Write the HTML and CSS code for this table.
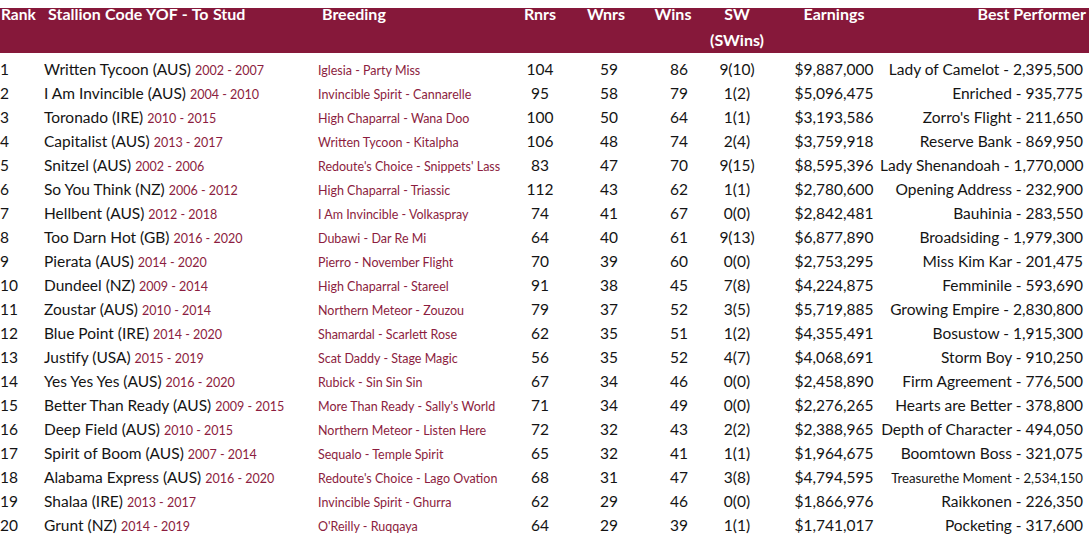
FILE: index.html
```html
<!DOCTYPE html>
<html lang="en">
<head>
<meta charset="utf-8">
<title>Stallions</title>
<link rel="stylesheet" href="styles.css">
</head>
<body>
<div class="wrap">
<table class="sires">
<colgroup>
<col class="c-rank"><col class="c-name"><col class="c-breed"><col class="c-rnrs"><col class="c-wnrs"><col class="c-wins"><col class="c-sw"><col class="c-earn"><col class="c-best">
</colgroup>
<thead>
<tr>
<th class="h-rank">Rank</th>
<th class="h-name">Stallion Code YOF - To Stud</th>
<th class="h-breed">Breeding</th>
<th class="h-rnrs">Rnrs</th>
<th class="h-wnrs">Wnrs</th>
<th class="h-wins">Wins</th>
<th class="h-sw">SW<br>(SWins)</th>
<th class="h-earn">Earnings</th>
<th class="h-best">Best Performer</th>
</tr>
</thead>
<tbody>
<tr><td class="rank">1</td><td class="name">Written Tycoon (AUS) <span class="yr">2002 - 2007</span></td><td class="breed"><span class="br">Iglesia - Party Miss</span></td><td class="rnrs">104</td><td class="wnrs">59</td><td class="wins">86</td><td class="sw">9(10)</td><td class="earn">$9,887,000</td><td class="best">Lady of Camelot - 2,395,500</td></tr>
<tr><td class="rank">2</td><td class="name">I Am Invincible (AUS) <span class="yr">2004 - 2010</span></td><td class="breed"><span class="br">Invincible Spirit - Cannarelle</span></td><td class="rnrs">95</td><td class="wnrs">58</td><td class="wins">79</td><td class="sw">1(2)</td><td class="earn">$5,096,475</td><td class="best">Enriched - 935,775</td></tr>
<tr><td class="rank">3</td><td class="name">Toronado (IRE) <span class="yr">2010 - 2015</span></td><td class="breed"><span class="br">High Chaparral - Wana Doo</span></td><td class="rnrs">100</td><td class="wnrs">50</td><td class="wins">64</td><td class="sw">1(1)</td><td class="earn">$3,193,586</td><td class="best">Zorro's Flight - 211,650</td></tr>
<tr><td class="rank">4</td><td class="name">Capitalist (AUS) <span class="yr">2013 - 2017</span></td><td class="breed"><span class="br">Written Tycoon - Kitalpha</span></td><td class="rnrs">106</td><td class="wnrs">48</td><td class="wins">74</td><td class="sw">2(4)</td><td class="earn">$3,759,918</td><td class="best">Reserve Bank - 869,950</td></tr>
<tr><td class="rank">5</td><td class="name">Snitzel (AUS) <span class="yr">2002 - 2006</span></td><td class="breed"><span class="br">Redoute's Choice - Snippets' Lass</span></td><td class="rnrs">83</td><td class="wnrs">47</td><td class="wins">70</td><td class="sw">9(15)</td><td class="earn">$8,595,396</td><td class="best">Lady Shenandoah - 1,770,000</td></tr>
<tr><td class="rank">6</td><td class="name">So You Think (NZ) <span class="yr">2006 - 2012</span></td><td class="breed"><span class="br">High Chaparral - Triassic</span></td><td class="rnrs">112</td><td class="wnrs">43</td><td class="wins">62</td><td class="sw">1(1)</td><td class="earn">$2,780,600</td><td class="best">Opening Address - 232,900</td></tr>
<tr><td class="rank">7</td><td class="name">Hellbent (AUS) <span class="yr">2012 - 2018</span></td><td class="breed"><span class="br">I Am Invincible - Volkaspray</span></td><td class="rnrs">74</td><td class="wnrs">41</td><td class="wins">67</td><td class="sw">0(0)</td><td class="earn">$2,842,481</td><td class="best">Bauhinia - 283,550</td></tr>
<tr><td class="rank">8</td><td class="name">Too Darn Hot (GB) <span class="yr">2016 - 2020</span></td><td class="breed"><span class="br">Dubawi - Dar Re Mi</span></td><td class="rnrs">64</td><td class="wnrs">40</td><td class="wins">61</td><td class="sw">9(13)</td><td class="earn">$6,877,890</td><td class="best">Broadsiding - 1,979,300</td></tr>
<tr><td class="rank">9</td><td class="name">Pierata (AUS) <span class="yr">2014 - 2020</span></td><td class="breed"><span class="br">Pierro - November Flight</span></td><td class="rnrs">70</td><td class="wnrs">39</td><td class="wins">60</td><td class="sw">0(0)</td><td class="earn">$2,753,295</td><td class="best">Miss Kim Kar - 201,475</td></tr>
<tr><td class="rank">10</td><td class="name">Dundeel (NZ) <span class="yr">2009 - 2014</span></td><td class="breed"><span class="br">High Chaparral - Stareel</span></td><td class="rnrs">91</td><td class="wnrs">38</td><td class="wins">45</td><td class="sw">7(8)</td><td class="earn">$4,224,875</td><td class="best">Femminile - 593,690</td></tr>
<tr><td class="rank">11</td><td class="name">Zoustar (AUS) <span class="yr">2010 - 2014</span></td><td class="breed"><span class="br">Northern Meteor - Zouzou</span></td><td class="rnrs">79</td><td class="wnrs">37</td><td class="wins">52</td><td class="sw">3(5)</td><td class="earn">$5,719,885</td><td class="best">Growing Empire - 2,830,800</td></tr>
<tr><td class="rank">12</td><td class="name">Blue Point (IRE) <span class="yr">2014 - 2020</span></td><td class="breed"><span class="br">Shamardal - Scarlett Rose</span></td><td class="rnrs">62</td><td class="wnrs">35</td><td class="wins">51</td><td class="sw">1(2)</td><td class="earn">$4,355,491</td><td class="best">Bosustow - 1,915,300</td></tr>
<tr><td class="rank">13</td><td class="name">Justify (USA) <span class="yr">2015 - 2019</span></td><td class="breed"><span class="br">Scat Daddy - Stage Magic</span></td><td class="rnrs">56</td><td class="wnrs">35</td><td class="wins">52</td><td class="sw">4(7)</td><td class="earn">$4,068,691</td><td class="best">Storm Boy - 910,250</td></tr>
<tr><td class="rank">14</td><td class="name">Yes Yes Yes (AUS) <span class="yr">2016 - 2020</span></td><td class="breed"><span class="br">Rubick - Sin Sin Sin</span></td><td class="rnrs">67</td><td class="wnrs">34</td><td class="wins">46</td><td class="sw">0(0)</td><td class="earn">$2,458,890</td><td class="best">Firm Agreement - 776,500</td></tr>
<tr><td class="rank">15</td><td class="name">Better Than Ready (AUS) <span class="yr">2009 - 2015</span></td><td class="breed"><span class="br">More Than Ready - Sally's World</span></td><td class="rnrs">71</td><td class="wnrs">34</td><td class="wins">49</td><td class="sw">0(0)</td><td class="earn">$2,276,265</td><td class="best">Hearts are Better - 378,800</td></tr>
<tr><td class="rank">16</td><td class="name">Deep Field (AUS) <span class="yr">2010 - 2015</span></td><td class="breed"><span class="br">Northern Meteor - Listen Here</span></td><td class="rnrs">72</td><td class="wnrs">32</td><td class="wins">43</td><td class="sw">2(2)</td><td class="earn">$2,388,965</td><td class="best">Depth of Character - 494,050</td></tr>
<tr><td class="rank">17</td><td class="name">Spirit of Boom (AUS) <span class="yr">2007 - 2014</span></td><td class="breed"><span class="br">Sequalo - Temple Spirit</span></td><td class="rnrs">65</td><td class="wnrs">32</td><td class="wins">41</td><td class="sw">1(1)</td><td class="earn">$1,964,675</td><td class="best">Boomtown Boss - 321,075</td></tr>
<tr><td class="rank">18</td><td class="name">Alabama Express (AUS) <span class="yr">2016 - 2020</span></td><td class="breed"><span class="br">Redoute's Choice - Lago Ovation</span></td><td class="rnrs">68</td><td class="wnrs">31</td><td class="wins">47</td><td class="sw">3(8)</td><td class="earn">$4,794,595</td><td class="best"><span class="sm">Treasurethe Moment - 2,534,150</span></td></tr>
<tr><td class="rank">19</td><td class="name">Shalaa (IRE) <span class="yr">2013 - 2017</span></td><td class="breed"><span class="br">Invincible Spirit - Ghurra</span></td><td class="rnrs">62</td><td class="wnrs">29</td><td class="wins">46</td><td class="sw">0(0)</td><td class="earn">$1,866,976</td><td class="best">Raikkonen - 226,350</td></tr>
<tr><td class="rank">20</td><td class="name">Grunt (NZ) <span class="yr">2014 - 2019</span></td><td class="breed"><span class="br">O'Reilly - Ruqqaya</span></td><td class="rnrs">64</td><td class="wnrs">29</td><td class="wins">39</td><td class="sw">1(1)</td><td class="earn">$1,741,017</td><td class="best">Pocketing - 317,600</td></tr>
</tbody>
</table>
</div>
</body>
</html>
```
FILE: styles.css
```css
html, body {
  margin: 0;
  padding: 0;
  background: #ffffff;
}
.wrap {
  padding-top: 1px;
  width: 1089px;
  overflow: hidden;
}
.sires {
  width: 1089px;
  table-layout: fixed;
  border-collapse: collapse;
  border-spacing: 0;
  font-family: Lato, "Liberation Sans", sans-serif;
  color: #141414;
}
.c-rank { width: 44px; }
.c-name { width: 274px; }
.c-breed { width: 190px; }
.c-rnrs { width: 64px; }
.c-wnrs { width: 74px; }
.c-wins { width: 60px; }
.c-sw { width: 82px; }
.c-earn { width: 92px; }
.c-best { width: 209px; }

.sires th {
  background: linear-gradient(to bottom, transparent 7px, #86183a 7px);
  color: #ffffff;
  font-weight: 700;
  font-size: 16px;
  line-height: 26px;
  padding: 0;
  vertical-align: top;
  white-space: nowrap;
  text-align: center;
}
.sires th.h-rank { text-align: left; padding-left: 1px; font-size: 15.5px; }
.sires th.h-name { text-align: left; padding-left: 4px; word-spacing: 0.5px; }
.sires th.h-breed { text-align: left; padding-left: 4px; }
.sires th.h-wnrs { padding-right: 6px; }
.sires th.h-wins { padding-right: 6px; }
.sires th.h-sw { padding-right: 20px; }
.sires th.h-best { text-align: right; padding-right: 3px; }

.sires td {
  font-size: 15.5px;
  line-height: 24px;
  height: 24px;
  padding: 0;
  white-space: nowrap;
  vertical-align: baseline;
  text-align: center;
}
.sires tbody tr:first-child td {
  padding-top: 4px;
}
.sires td.rank, .sires td.name, .sires td.breed { text-align: left; }
.sires td.rank { padding-left: 0; }
.sires td.wins { padding-left: 6px; }
.sires td.sw { padding-right: 20px; }
.sires td.best { text-align: right; padding-right: 6px; }
.sm {
  font-size: 13.2px;
  line-height: 1;
}
.yr {
  color: #8c1d40;
  font-size: 12.5px;
  line-height: 1;
}
.br {
  color: #8c1d40;
  font-size: 12.5px;
  line-height: 1;
}
```
